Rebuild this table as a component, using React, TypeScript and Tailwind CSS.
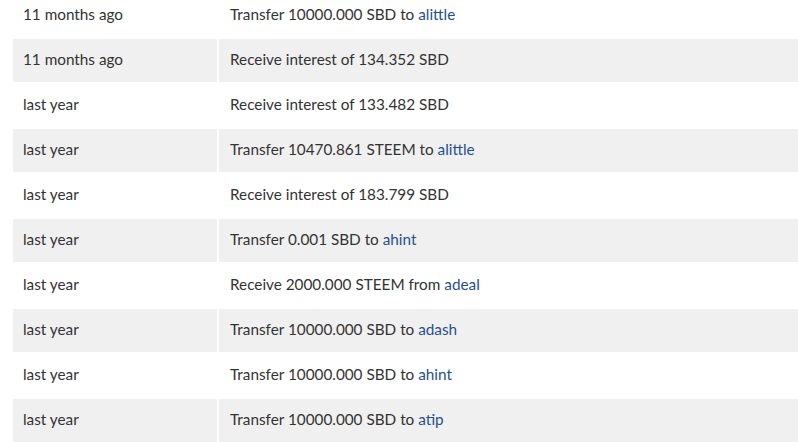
import React from "react";

type Row = { time: string; text: string; link?: string };

const rows: Row[] = [
  { time: "11 months ago", text: "Transfer 10000.000 SBD to ", link: "alittle" },
  { time: "11 months ago", text: "Receive interest of 134.352 SBD" },
  { time: "last year", text: "Receive interest of 133.482 SBD" },
  { time: "last year", text: "Transfer 10470.861 STEEM to ", link: "alittle" },
  { time: "last year", text: "Receive interest of 183.799 SBD" },
  { time: "last year", text: "Transfer 0.001 SBD to ", link: "ahint" },
  { time: "last year", text: "Receive 2000.000 STEEM from ", link: "adeal" },
  { time: "last year", text: "Transfer 10000.000 SBD to ", link: "adash" },
  { time: "last year", text: "Transfer 10000.000 SBD to ", link: "ahint" },
  { time: "last year", text: "Transfer 10000.000 SBD to ", link: "atip" },
];

export default function App() {
  return (
    <div
      className="w-[798px] h-[442px] overflow-hidden bg-white text-[#333] text-[15.3px]"
      style={{ fontFamily: "Lato, 'Open Sans', sans-serif" }}
    >
      <div className="flex flex-col gap-[2px] pl-[13px] mt-[-6px]">
        {rows.map((r, i) => {
          const bg = i % 2 === 1 ? "bg-[#f1f0f1]" : "bg-white";
          return (
            <div key={i} className="flex gap-[2px] h-[43px] shrink-0">
              <div className={`w-[204px] shrink-0 flex items-center pl-[10px] pb-[3px] ${bg}`}>
                {r.time}
              </div>
              <div className={`flex-1 flex items-center pl-[11px] pb-[3px] ${bg}`}>
                <span>
                  {r.text}
                  {r.link && <span className="text-[#1f4f91]">{r.link}</span>}
                </span>
              </div>
            </div>
          );
        })}
      </div>
    </div>
  );
}
